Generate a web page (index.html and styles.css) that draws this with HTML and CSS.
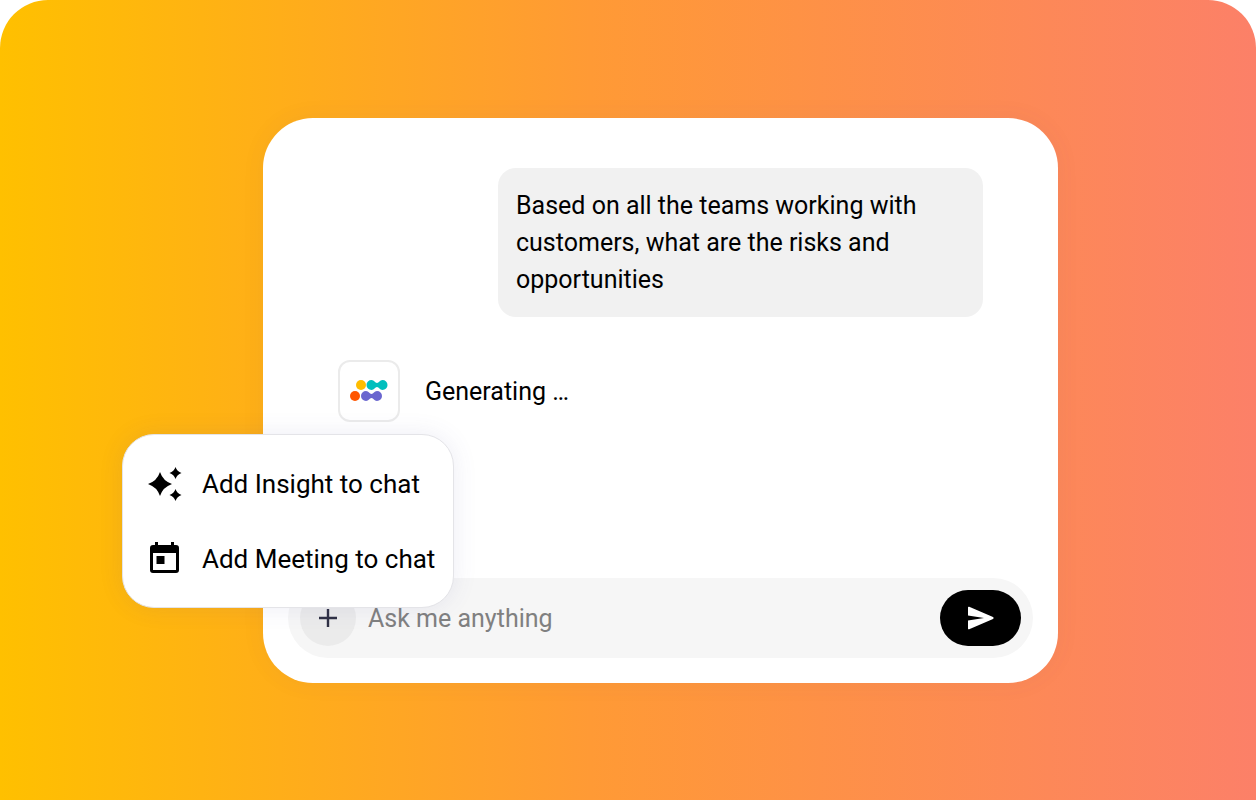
FILE: index.html
```html
<!DOCTYPE html>
<html lang="en">
  <head>
    <meta charset="UTF-8" />
    <meta name="viewport" content="width=device-width, initial-scale=1.0" />
    <title>Chat</title>
    <link rel="stylesheet" href="styles.css">
  </head>
  <body>
    <main class="hero">
      <section class="chat">
        <p class="message">
          Based on all the teams working with customers, what are the risks and
          opportunities
        </p>
        <div class="reply">
          <div class="reply-logo">
            <svg width="38" height="22" viewBox="0 0 38 22" aria-hidden="true">
              <circle cx="11" cy="5" r="5" fill="#ffbd00" />
              <circle cx="5" cy="16" r="5" fill="#ff5500" />
              <path fill="#00bfbd" d="M21.500 0c2.800 0 3.500 3 5.500 3S29.700 0 32.500 0a5 5 0 0 1 0 10c-2.800 0-3.500-3-5.500-3S24.300 10 21.500 10a5 5 0 0 1 0-10z" />
              <path fill="#6a66cf" d="M16 11c2.800 0 3.500 3 5.500 3S24.200 11 27 11a5 5 0 0 1 0 10c-2.800 0-3.500-3-5.500-3S18.800 21 16 21a5 5 0 0 1 0-10z" />
            </svg>
          </div>
          <p class="reply-text">Generating …</p>
        </div>

        <form class="composer">
          <button class="add-button" type="button" aria-label="Add">
            <svg width="20" height="20" viewBox="0 0 20 20" aria-hidden="true">
              <path d="M10 1v18M1 10h18" stroke="#2f3044" stroke-width="2.400" />
            </svg>
          </button>
          <input class="composer-input" type="text" placeholder="Ask me anything" aria-label="Ask me anything" />
          <button class="send-button" type="submit" aria-label="Send">
            <svg width="28" height="24" viewBox="0 0 28 24" aria-hidden="true">
              <path fill="#fff" d="M1 1.500Q1 .3 2.200.8L26 11q1.500 1 0 2L2.200 23.200Q1 23.700 1 22.500V14.500L17 12 1 9.500z" />
            </svg>
          </button>
        </form>

        <div class="menu">
          <button class="menu-item" type="button">
            <svg class="menu-icon" width="34" height="34" viewBox="0 0 34 34" aria-hidden="true">
              <path d="M12 5Q15 14 24 17 15 20 12 29 9 20 0 17 9 14 12 5z" />
              <path d="M27.500 0Q29 4.500 33.500 6 29 7.500 27.500 12 26 7.500 21.500 6 26 4.500 27.500 0z" />
              <path d="M27.500 22Q29 26.500 33.500 28 29 29.500 27.500 34 26 29.500 21.500 28 26 26.500 27.500 22z" />
            </svg>
            Add Insight to chat
          </button>
          <button class="menu-item" type="button">
            <svg class="menu-icon" width="34" height="34" viewBox="0 0 34 34" aria-hidden="true">
              <path fill-rule="evenodd" d="M7 0h3v3h13V0h3v3h2q3 0 3 3v22q0 3-3 3H5q-3 0-3-3V6q0-3 3-3h2zM5 11v17h23V11z" />
              <path d="M8.500 14h8v8h-8z" />
            </svg>
            Add Meeting to chat
          </button>
        </div>
      </section>
    </main>
  </body>
</html>
```
FILE: styles.css
```css
* {
  box-sizing: border-box;
}

body {
  margin: 0;
  background-color: #fff;
  color: #000;
  font-family: Roboto, sans-serif;
  font-size: 25px;
}

p {
  margin: 0;
}

button,
input {
  padding: 0;
  border: none;
  background: none;
  color: inherit;
  font: inherit;
}

button {
  cursor: pointer;
}

.hero {
  display: flex;
  min-height: 100vh;
  padding: 118px 198px 117px 263px;
  border-radius: 48px 48px 0 0;
  background: linear-gradient(90deg, #ffc000 0%, #ff9a35 47%, #fc8068 100%);
}

.chat {
  position: relative;
  display: flex;
  flex: 1;
  flex-direction: column;
  padding: 50px 25px 25px;
  border-radius: 50px;
  background-color: #fff;
  box-shadow: 0 0 24px rgba(80, 80, 120, 0.06);
}

.message {
  align-self: flex-end;
  width: 100%;
  max-width: 485px;
  margin-right: 50px;
  padding: 19px 18px;
  border-radius: 18px;
  background-color: #f1f1f1;
  line-height: 37px;
}

.reply {
  display: flex;
  align-items: center;
  gap: 25px;
  margin: 43px 50px;
}

.reply-logo {
  display: flex;
  align-items: center;
  justify-content: center;
  width: 62px;
  height: 62px;
  border: 2px solid #ebebeb;
  border-radius: 12px;
}

.composer {
  display: flex;
  align-items: center;
  gap: 12px;
  margin-top: auto;
  padding: 12px;
  border-radius: 41px;
  background-color: #f6f6f6;
}

.add-button {
  display: flex;
  align-items: center;
  justify-content: center;
  flex: none;
  width: 56px;
  height: 56px;
  border-radius: 50%;
  background-color: #ebebeb;
}

.composer-input {
  flex: 1;
  min-width: 0;
  height: 56px;
}

.composer-input::placeholder {
  color: #808080;
  opacity: 1;
}

.send-button {
  display: flex;
  align-items: center;
  justify-content: center;
  flex: none;
  width: 81px;
  height: 56px;
  border-radius: 28px;
  background-color: #000;
}

.menu {
  position: absolute;
  bottom: 75px;
  left: -141px;
  display: flex;
  flex-direction: column;
  gap: 26px;
  width: 332px;
  padding: 24px 25px;
  border: 1px solid #e4e4e8;
  border-radius: 32px;
  background-color: #fff;
  box-shadow: 0 0 24px rgba(80, 80, 160, 0.1);
}

.menu-item {
  display: flex;
  align-items: center;
  gap: 20px;
  height: 49px;
  font-size: 26px;
  white-space: nowrap;
}

.menu-icon {
  flex: none;
}
```
